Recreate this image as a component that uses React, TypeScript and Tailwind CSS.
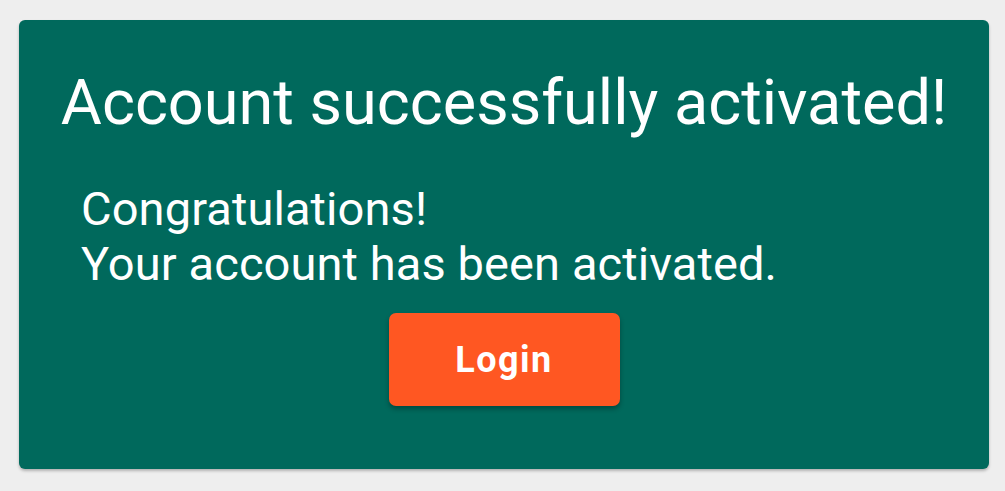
export default function App() {
  return (
    <div className="min-h-screen bg-[#eeeeee] pt-[20px] px-[19px] font-['Roboto',sans-serif]">
      {/* Activation card */}
      <div className="w-[970px] h-[449px] rounded-[6px] bg-[#00695c] shadow-[0_2px_3px_rgba(0,0,0,0.25)] pt-[51px] text-white">
        <h1 className="text-center text-[63px] leading-[64px] font-normal">
          Account successfully activated!
        </h1>

        <div className="mt-[46px] pl-[62px] text-[47px] leading-[55px] tracking-[0.1px]">
          <p>Congratulations!</p>
          <p>Your account has been activated.</p>
        </div>

        <div className="mt-[22px] flex justify-center">
          <button className="w-[231px] h-[93px] rounded-[7px] bg-[#ff5722] text-[36px] font-bold tracking-[0.04em] text-white shadow-[0_3px_5px_rgba(0,0,0,0.3)]">
            Login
          </button>
        </div>
      </div>
    </div>
  );
}
